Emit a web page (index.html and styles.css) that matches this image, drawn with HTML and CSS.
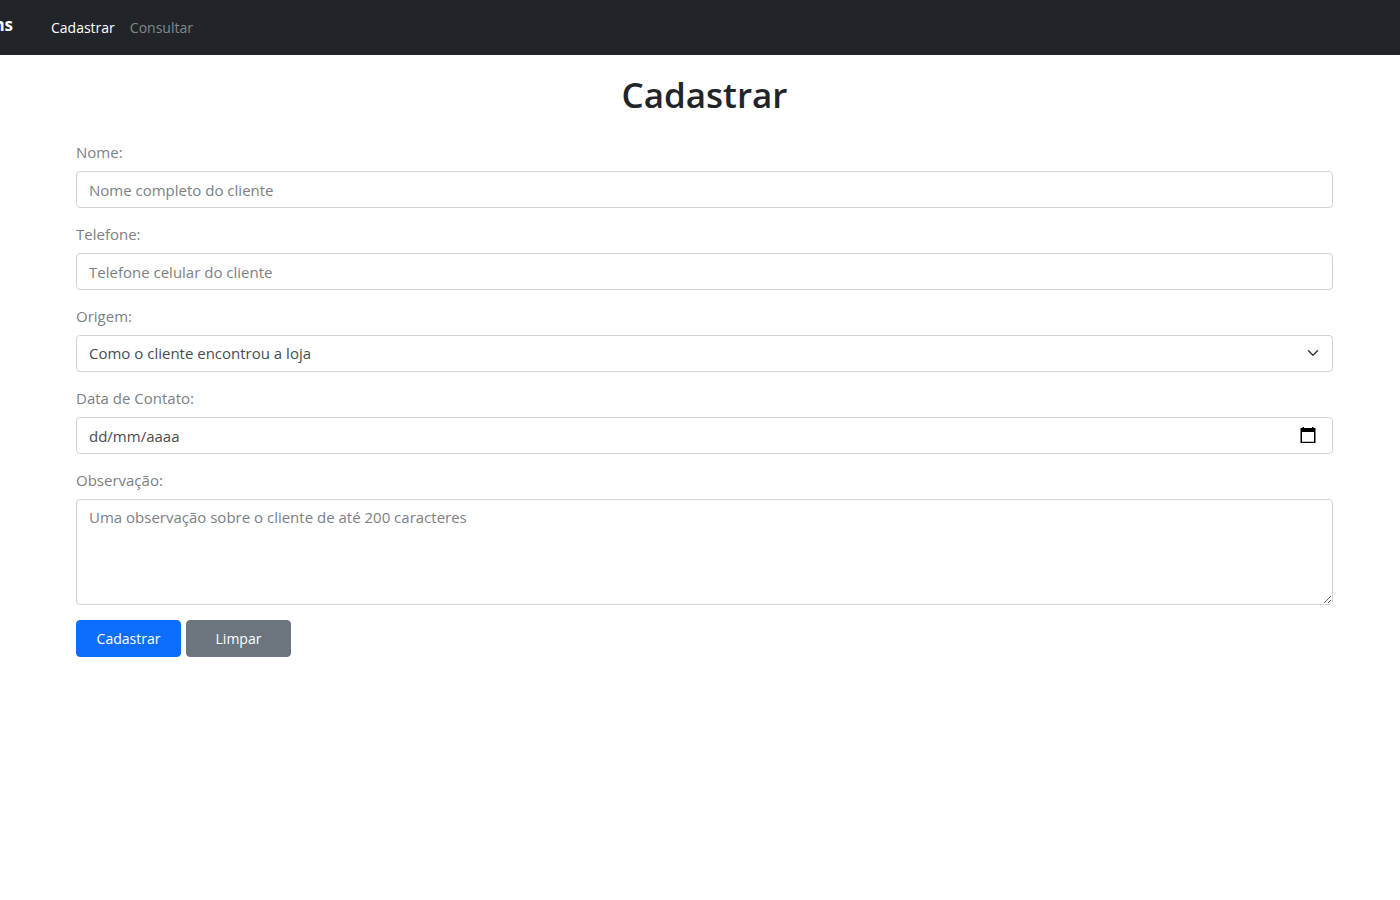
FILE: index.html
```html
<!DOCTYPE html>
<html lang="pt-BR">
<head>
<meta charset="utf-8">
<meta name="viewport" content="width=device-width, initial-scale=1">
<title>Cadastrar</title>
<link rel="stylesheet" href="styles.css">
</head>
<body>
<header class="navbar">
  <a class="brand" href="#">ns</a>
  <nav class="nav">
    <a class="nav-link active" href="#" aria-current="page">Cadastrar</a>
    <a class="nav-link" href="#">Consultar</a>
  </nav>
</header>
<main class="container">
  <h1 class="title">Cadastrar</h1>
  <form class="form">
    <div class="field">
      <label class="label" for="nome">Nome:</label>
      <input class="control" id="nome" type="text" placeholder="Nome completo do cliente">
    </div>
    <div class="field">
      <label class="label" for="telefone">Telefone:</label>
      <input class="control" id="telefone" type="tel" placeholder="Telefone celular do cliente">
    </div>
    <div class="field">
      <label class="label" for="origem">Origem:</label>
      <div class="control-wrap">
        <select class="control select" id="origem">
          <option>Como o cliente encontrou a loja</option>
        </select>
        <svg class="chevron" viewBox="0 0 16 16" aria-hidden="true"><path d="M2 5l6 6 6-6"/></svg>
      </div>
    </div>
    <div class="field">
      <label class="label" for="data">Data de Contato:</label>
      <div class="control-wrap">
        <input class="control date" id="data" type="text" inputmode="numeric" placeholder="dd/mm/aaaa">
        <button class="picker" type="button" aria-label="Abrir calendário">
          <svg class="calendar" viewBox="0 0 16 18" aria-hidden="true"><path fill-rule="evenodd" d="M2.500 1h1.500v1h8V1h1.500v1h2v15H.5V2h2zM2 6v9.700h12V6z"/></svg>
        </button>
      </div>
    </div>
    <div class="field">
      <label class="label" for="obs">Observação:</label>
      <textarea class="control textarea" id="obs" maxlength="200" placeholder="Uma observação sobre o cliente de até 200 caracteres"></textarea>
    </div>
    <div class="actions">
      <button class="btn primary" type="submit">Cadastrar</button>
      <button class="btn secondary" type="reset">Limpar</button>
    </div>
  </form>
</main>
</body>
</html>
```
FILE: styles.css
```css
* {
  box-sizing: border-box;
}

body {
  margin: 0;
  background: #fff;
  color: #212529;
  font: 15px/23px "Open Sans", "Noto Sans", sans-serif;
}

.navbar {
  display: flex;
  align-items: flex-start;
  gap: 38px;
  padding: 13px 0 15px;
  background: #212529;
}

.brand {
  display: flex;
  justify-content: flex-end;
  width: 13px;
  overflow: hidden;
  color: #fff;
  font-size: 17px;
  font-weight: 700;
  line-height: 24px;
  text-decoration: none;
}

.nav {
  display: flex;
  gap: 15px;
  padding-top: 2px;
  font-size: 14px;
  line-height: 25px;
}

.nav-link {
  color: #85888b;
  text-decoration: none;
}

.nav-link.active {
  color: #fff;
}

.container {
  padding: 17px 67px 18px 76px;
}

.title {
  margin: 0 0 23px;
  font-size: 35px;
  font-weight: 600;
  line-height: 46px;
  text-align: center;
}

.form,
.field {
  display: flex;
  flex-direction: column;
}

.form {
  gap: 15px;
}

.field {
  gap: 7px;
}

.label {
  color: #7b8085;
}

.control {
  display: block;
  width: 100%;
  height: 37px;
  margin: 0;
  padding: 6px 12px;
  border: 1px solid #ced4da;
  border-radius: 4px;
  background: #fff;
  color: #484c50;
  font: inherit;
}

.control::placeholder {
  color: #7b8085;
  opacity: 1;
}

.control-wrap {
  position: relative;
}

.select {
  appearance: none;
}

.chevron {
  position: absolute;
  top: 12px;
  right: 14px;
  width: 12px;
  height: 12px;
  fill: none;
  stroke: #343a40;
  stroke-width: 2;
  stroke-linecap: round;
  stroke-linejoin: round;
  pointer-events: none;
}

.date::placeholder {
  color: #484c50;
}

.picker {
  position: absolute;
  top: 9px;
  right: 17px;
  padding: 0;
  border: 0;
  background: none;
}

.calendar {
  display: block;
  width: 16px;
  height: 18px;
}

.textarea {
  height: 106px;
  resize: vertical;
}

.actions {
  display: flex;
  gap: 5px;
}

.btn {
  width: 105px;
  padding: 6px 12px;
  border: 1px solid;
  border-radius: 4px;
  color: #fff;
  font: inherit;
  font-size: 14px;
}

.primary {
  border-color: #0d6efd;
  background: #0d6efd;
}

.secondary {
  border-color: #6c757d;
  background: #6c757d;
}
```
